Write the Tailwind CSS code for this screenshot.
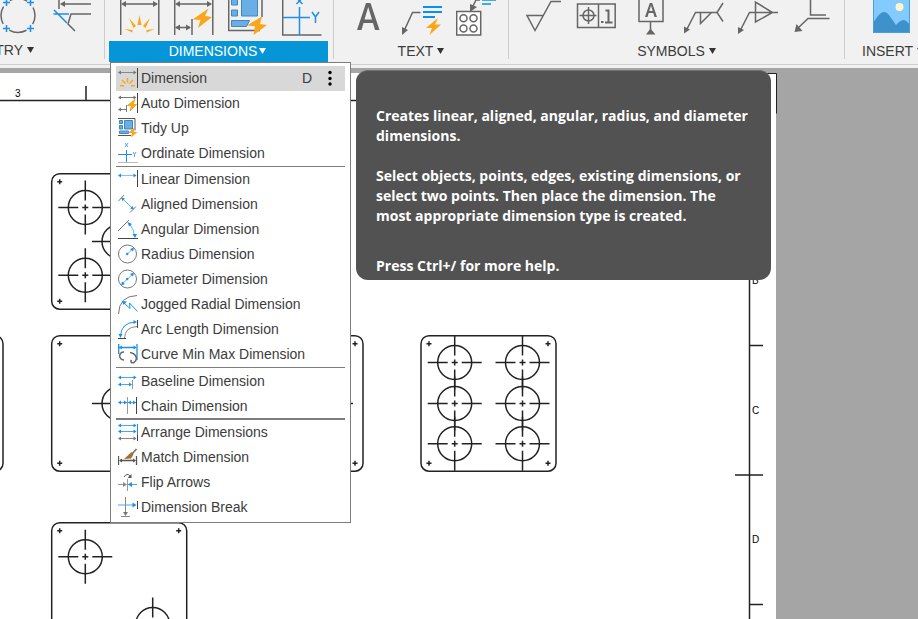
<!DOCTYPE html>
<html lang="en">
<head>
    <meta charset="UTF-8">
    <meta name="viewport" content="width=device-width, initial-scale=1.0">
    <title>Drawing - Dimensions</title>
    <script src="https://cdn.jsdelivr.net/npm/@tailwindcss/browser@4"></script>
</head>
<body class="relative flex h-screen flex-col overflow-hidden bg-[#a5a5a5] font-['Liberation_Sans',Arial,sans-serif] text-sm text-[#3c3c3c]">

    <!-- Toolbar -->
    <header class="flex h-[68px] shrink-0 overflow-hidden bg-[#f1f1f1]">
        <div class="flex min-w-full border-b border-[#cfcfcf] h-[65px]">

            <section class="flex h-[59px] w-[105px] shrink-0 flex-col border-r border-[#cccccc]">
                <div class="flex h-[41px] items-start justify-end gap-[14px] pr-3">
                    <button aria-label="Center mark pattern" class="shrink-0"><svg class="size-10" viewBox="0 0 40 40" fill="none">
                        <circle cx="20" cy="15.500" r="17" stroke="#666" stroke-width="1.500" stroke-dasharray="18 8.700" stroke-dashoffset="9"/>
                        <path d="M5 2.500h7M8.500 -1v7M29 2.500h7M32.500 -1v7M5 28.500h7M8.500 25v7M29 28.500h7M32.500 25v7" stroke="#1e8fe8" stroke-width="1.500"/>
                    </svg></button>
                    <button aria-label="Edge extension" class="shrink-0"><svg class="size-10" viewBox="0 0 40 40" fill="none" stroke="#666" stroke-width="1.500">
                        <path d="M7 -2v11M9 4h30M39 14H19l-3 10 7 7"/>
                        <path d="M8 4l5 -3v6z" fill="#666" stroke="none"/>
                        <path d="M1.500 14H17M2 10l13 13" stroke="#1e8fe8"/>
                    </svg></button>
                </div>
                <button class="flex h-[21px] w-full items-center justify-end gap-1 pr-[70px] pb-px"><span>TRY</span><svg class="h-[6px] w-[7px] shrink-0" viewBox="0 0 7 6"><path d="M0 0h7L3.500 6z" fill="#333"/></svg></button>
            </section>

            <section class="ml-1 w-[219px] shrink-0">
                <div class="flex h-[41px] items-start gap-[14px] pl-[11px]">
                    <button aria-label="Dimension"><svg class="size-10" viewBox="0 0 40 40" fill="none">
                        <path d="M.7 0v35M38.800 0v35M3 4h34" stroke="#666" stroke-width="1.500"/>
                        <path d="M1 4l5 -3v6zM38 4l-5 -3v6z" fill="#666"/>
                        <path d="M19.500 15l2 10h-4zM9 18l7 8-2.500 2zM30 18l-7 8 2.500 2zM4.500 29l8 1v2.500zM34.500 29l-8 1v2.500z" fill="#faa61a"/>
                    </svg></button>
                    <button aria-label="Auto Dimension"><svg class="size-10" viewBox="0 0 40 40" fill="none">
                        <path d="M.7 0v35M38.800 0v35M3 4h34M18 19v16M2 27.500h14" stroke="#666" stroke-width="1.500"/>
                        <path d="M1 4l5 -3v6zM38 4l-5 -3v6zM1 27.500l5 -3v6zM17 27.500l-5 -3v6z" fill="#666"/>
                        <path d="M34.500 8.500L18.500 19.500l8 .5-2.500 8L38 17l-7-1z" fill="#faa61a"/>
                    </svg></button>
                    <button aria-label="Tidy Up"><svg class="size-10" viewBox="0 0 40 40" fill="none">
                        <path d="M.7 0v30.500H32M34 0v17" stroke="#666" stroke-width="1.500"/>
                        <path d="M3.500 -2h6v7h-6zM13.500 -2h16v18h-16zM3.500 10h6v6h-6zM3.500 20.500h18l-3 6h-15z" fill="#69afe5" stroke="#4187bd"/>
                        <path d="M34 16.500L19 25.500l8 .8-1.500 8.700L39 25l-7-1z" fill="#faa61a"/>
                    </svg></button>
                    <button aria-label="Ordinate Dimension"><svg class="size-10" viewBox="0 0 40 40" fill="none" stroke="#1e8fe8" stroke-width="1.500">
                        <path d="M.7 0v35H39.500" stroke="#666"/>
                        <path d="M1 17.500h27M17.500 7v28M14.500 4l6 -6M20.500 4l-6 -6M30 12l3.500 5 3.500-5M33.500 17v6"/>
                    </svg></button>
                </div>
                <button class="flex h-[21px] w-full items-center justify-center gap-0.5 bg-[#0696d7] pr-0.5 pb-px text-white"><span>DIMENSIONS</span><svg class="h-[6px] w-[7px]" viewBox="0 0 7 6"><path d="M0 0h7L3.500 6z" fill="#fff"/></svg></button>
            </section>

            <section class="ml-[5px] h-[59px] w-[176px] shrink-0 border-x border-[#cccccc]">
                <div class="flex h-[41px] items-start gap-[14px] pl-[14px]">
                    <button aria-label="Text"><svg class="size-10" viewBox="0 0 40 40">
                        <path d="M9 30L18 3h4.500L31.500 30h-4.500l-2-7H15.500l-2 7zM16.500 19.500h7.500L20.200 7z" fill="#666" fill-rule="evenodd"/>
                    </svg></button>
                    <button aria-label="Leader text"><svg class="size-10" viewBox="0 0 40 40" fill="none">
                        <path d="M18.500 12.500h-8L2 31" stroke="#666" stroke-width="1.500"/>
                        <path d="M0 35v-8l6 3z" fill="#666"/>
                        <path d="M21 7h19M21 12h19M21 17h12" stroke="#0a91ee" stroke-width="2"/>
                        <path d="M36 18l-12 10h6l-2.500 7L39 24.500h-6z" fill="#faa61a"/>
                    </svg></button>
                    <button aria-label="Hole note"><svg class="size-10" viewBox="0 0 40 40" fill="none">
                        <path d="M.7 11.500h24v23.500H.7z" fill="#fff" stroke="#666" stroke-width="1.500"/>
                        <g stroke="#666" stroke-width="1.500"><circle cx="7.500" cy="18.300" r="3.500"/><circle cx="17.500" cy="18.300" r="3.500"/><circle cx="7.500" cy="28.500" r="3.500"/><circle cx="17.500" cy="28.500" r="3.500"/><path d="M24 0h-4l-4 8"/></g>
                        <path d="M14 12V4l7 3z" fill="#666"/>
                        <path d="M26 0h14M26 4h9" stroke="#0a91ee" stroke-width="1.500"/>
                    </svg></button>
                </div>
                <button class="flex h-[21px] w-full items-center justify-center gap-1 pb-px"><span>TEXT</span><svg class="h-[6px] w-[7px]" viewBox="0 0 7 6"><path d="M0 0h7L3.500 6z" fill="#333"/></svg></button>
            </section>

            <section class="h-[59px] w-[336px] shrink-0 border-r border-[#cccccc]">
                <div class="flex h-[41px] items-start gap-[14px] pl-[13px]">
                    <button aria-label="Surface texture"><svg class="size-10" viewBox="0 0 40 40" fill="none" stroke="#666" stroke-width="1.500">
                        <path d="M21 15.500H5l8 15L29 1.500h10"/>
                    </svg></button>
                    <button aria-label="Feature control frame"><svg class="size-10" viewBox="0 0 40 40" fill="none" stroke="#666" stroke-width="1.500">
                        <path d="M1.500 4h37.700v23.500h-37.700zM22.500 4v23.500M3.500 15.500h17M12.500 7v17"/><circle cx="12.500" cy="15.500" r="5.500"/>
                        <path d="M25 22h2.500M29.500 10.500h3v12M29 22.500h7.500" stroke-width="2"/>
                    </svg></button>
                    <button aria-label="Datum identifier"><svg class="size-10" viewBox="0 0 40 40" fill="none">
                        <path d="M9 -2v23.500h24V-2M20.500 22v8" stroke="#666" stroke-width="1.500"/>
                        <path d="M16 34.500l4.500-6 5 6z" fill="#666"/>
                        <path d="M15 17L19.800 3h2.400L27 17h-2.500l-1.200-4H18.700l-1.200 4zM19.300 11h3.400L21 5.500z" fill="#666" fill-rule="evenodd"/>
                    </svg></button>
                    <button aria-label="Welding symbol"><svg class="size-10" viewBox="0 0 40 40" fill="none" stroke="#666" stroke-width="1.500">
                        <path d="M2.500 30l9-17.500H33M16.500 12.500v11l11-11M39 3l-6 9.500 6 9"/><path d="M0 33.500v-7l6 3z" fill="#666" stroke="none"/>
                    </svg></button>
                    <button aria-label="Taper and slope"><svg class="size-10" viewBox="0 0 40 40" fill="none" stroke="#666" stroke-width="1.500">
                        <path d="M2.500 30l9-17.500H40M17.500 2v20l17-9.500z"/><path d="M0 34v-7l6 3z" fill="#666" stroke="none"/>
                    </svg></button>
                    <button aria-label="Bend note"><svg class="size-10" viewBox="0 0 40 40" fill="none" stroke="#666" stroke-width="1.500">
                        <path d="M18.500 0v15H34M37.500 18.500H16L6 28"/><path d="M2.500 32l2-8 6 7z" fill="#666" stroke="none"/>
                    </svg></button>
                </div>
                <button class="flex h-[21px] w-full items-center justify-center gap-1 pb-px"><span>SYMBOLS</span><svg class="h-[6px] w-[7px]" viewBox="0 0 7 6"><path d="M0 0h7L3.500 6z" fill="#333"/></svg></button>
            </section>

            <section class="grow">
                <div class="flex h-[41px] items-start pl-[27px]">
                    <button aria-label="Insert image" class="shrink-0"><svg class="size-10" viewBox="0 0 40 40">
                        <path d="M1 0h37v33H1z" fill="#83cbff"/>
                        <path d="M1 23C8 12 12 9 17 15l7 10c5-5 8-8 14 0v8H1z" fill="#3d92cc"/>
                        <circle cx="27.500" cy="7" r="4" fill="#fff6cb"/>
                        <path d="M1.500 0v32.500h36V0" fill="none" stroke="#4b9fd7"/>
                    </svg></button>
                </div>
                <button class="flex h-[21px] items-center gap-1 pb-px pl-[17px]"><span>INSERT</span><svg class="h-[6px] w-[7px] shrink-0" viewBox="0 0 7 6"><path d="M0 0h7L3.500 6z" fill="#333"/></svg></button>
            </section>
        </div>
    </header>

    <!-- Drawing sheet -->
    <main class="min-h-0 flex-1 overflow-hidden">
        <svg class="h-[551px] w-[778px]" viewBox="0 68 778 551" fill="none" stroke="#222" stroke-width="1.500" font-family="Liberation Sans" font-size="10">
            <defs>
                <g id="plus"><path d="M-2.500 0h5M0 -2.500v5"/></g>
                <g id="hole"><circle r="17"/><path d="M-27 0h20M-3 0h6M7 0h20M0 -27v20M0 -3v6M0 7v20"/></g>
                <g id="plate"><rect width="135" height="135.500" rx="8"/><use href="#plus" x="8" y="8"/><use href="#plus" x="127" y="8"/><use href="#plus" x="8" y="127.500"/><use href="#plus" x="127" y="127.500"/></g>
                <clipPath id="inside"><rect x="420" y="335.500" width="137" height="135.500"/></clipPath>
            </defs>
            <path d="M0 73h776v546H0z" fill="#fff" stroke="none"/>
            <path d="M700 73.500h76.500v40" stroke-width="1"/>
            <path d="M0 100.500h749.500M86 86v14M749.500 100v519M749 345.500h14M735 475h28M749 604.500h14"/>

            <use href="#plate" x="51.700" y="173.700"/>
            <use href="#hole" x="85.300" y="207.500"/>
            <use href="#hole" x="119" y="241.500"/>
            <use href="#hole" x="85.300" y="275.200"/>

            <use href="#plate" x="-132" y="335.700"/>
            <use href="#plate" x="51.700" y="335.700"/>
            <use href="#hole" x="119" y="403.500"/>
            <use href="#plate" x="228" y="335.700"/>
            <path d="M351 403.500h2"/>

            <use href="#plate" x="421" y="335.700"/>
            <g clip-path="url(#inside)">
                <use href="#hole" x="454.700" y="362.500"/><use href="#hole" x="522.500" y="362.500"/>
                <use href="#hole" x="454.700" y="403.500"/><use href="#hole" x="522.500" y="403.500"/>
                <use href="#hole" x="454.700" y="443.700"/><use href="#hole" x="522.500" y="443.700"/>
            </g>

            <use href="#plate" x="51.700" y="522.700"/>
            <use href="#hole" x="85.300" y="556.700"/>
            <use href="#hole" x="152.700" y="624.500"/>

            <g fill="#000" stroke="none">
                <text x="15" y="97">3</text>
                <text x="752" y="284">B</text>
                <text x="752" y="414">C</text>
                <text x="752" y="543">D</text>
            </g>
        </svg>
    </main>

    <!-- Dimensions menu -->
    <div role="menu" class="absolute left-[110px] top-[62px] flex w-[241px] flex-col border border-[#7d7d7d] bg-white px-[5px] pt-[3px] pb-0.5">
        <div class="flex h-[25px] items-center bg-[#d8d8d8] pr-[13px] pb-px pl-0.5">
            <button role="menuitem" class="flex grow items-center gap-[3px]">
                <svg class="size-5" viewBox="0 0 20 20" fill="none"><path d="M19.500 0v20" stroke="#444"/><path d="M1 4.500h17" stroke="#888"/><path d="M0 4.500l3-2v4zM18.500 4.500l-3-2v4z" fill="#777"/><path d="M9.500 10v4.500M4 12l3.500 3.500M15 12l-3.500 3.500M2 17.500l4 .5M17 17.500l-4 .5" stroke="#faa61a" stroke-width="1.500"/></svg>
                <span>Dimension</span>
                <kbd class="ml-auto font-[inherit]">D</kbd>
            </button>
            <button aria-label="More options" class="ml-[16px]"><svg class="h-4 w-1" viewBox="0 0 4 16"><circle cx="2" cy="2.500" r="1.700"/><circle cx="2" cy="8.500" r="1.700"/><circle cx="2" cy="14" r="1.700"/></svg></button>
        </div>
        <button role="menuitem" class="flex h-[25px] items-center gap-[3px] pb-px pl-0.5">
            <svg class="size-5" viewBox="0 0 20 20" fill="none"><path d="M19.500 0v20" stroke="#444"/><path d="M1 4.500h17M1 16.500h7M8.500 12v7" stroke="#777"/><path d="M0 4.500l3-2v4zM18.500 4.500l-3-2v4zM0 16.500l3-2v4z" fill="#777"/><path d="M17 6.500L9.500 12.500h4L12 18l6.500-6.500H15z" fill="#faa61a" stroke="#faa61a"/></svg>
            <span>Auto Dimension</span>
        </button>
        <button role="menuitem" class="flex h-[25px] items-center gap-[3px] pb-px pl-0.5">
            <svg class="size-5" viewBox="0 0 20 20" fill="none"><path d="M0 .5h17v12M0 17.500h13" stroke="#555"/><path d="M1.500 2.500h3v3h-3zM6.500 2.500h8v8.500h-8zM1.500 7.500h3V11h-3zM1.500 13h9v2.500h-9z" fill="#69afe5" stroke="#3f86bd"/><path d="M16 10l-6 5h4l-1 4.500 6.500-5.500h-3.500z" fill="#faa61a"/></svg>
            <span>Tidy Up</span>
        </button>
        <button role="menuitem" class="flex h-[25px] items-center gap-[3px] pb-px pl-0.5">
            <svg class="size-5" viewBox="0 0 20 20" fill="none" stroke="#1e8fe8"><path d="M0 19.500h20" stroke="#bbb"/><path d="M0 11.500h14M8.500 7v12"/><path d="M7 0l3 4M10 0L7 4M15 9l1.500 2.500L18 9M16.500 11.500V14" stroke-width=".8"/></svg>
            <span>Ordinate Dimension</span>
        </button>
        <hr class="border-[#7d7d7d]">
        <button role="menuitem" class="flex h-[25px] items-center gap-[3px] pb-px pl-0.5">
            <svg class="size-5" viewBox="0 0 20 20" fill="none"><path d="M19.500 1v17" stroke="#444"/><path d="M1 6.500h17" stroke="#80c0f3"/><path d="M0 6.500l3-2v4zM18.500 6.500l-3-2v4z" fill="#1e8fe8"/></svg>
            <span>Linear Dimension</span>
        </button>
        <button role="menuitem" class="flex h-[25px] items-center gap-[3px] pb-px pl-0.5">
            <svg class="size-5" viewBox="0 0 20 20" fill="none"><path d="M.5 7L6 1M12 18.500l6-6" stroke="#777"/><path d="M4 4.500l11 10" stroke="#69afe5"/><path d="M3 3.500l4 1-2.500 2.500zM16 15.500l-4-1 2.500-2.500z" fill="#1e8fe8"/></svg>
            <span>Aligned Dimension</span>
        </button>
        <button role="menuitem" class="flex h-[25px] items-center gap-[3px] pb-px pl-0.5">
            <svg class="size-5" viewBox="0 0 20 20" fill="none"><path d="M0 19.500h20" stroke="#444"/><path d="M0 12L11 1" stroke="#777"/><path d="M11.500 5q5 6 5 12" stroke="#69afe5"/><path d="M9.500 3l4.500 2-3 2.500zM17 19l-2.500-4H19z" fill="#1e8fe8"/></svg>
            <span>Angular Dimension</span>
        </button>
        <button role="menuitem" class="flex h-[25px] items-center gap-[3px] pb-px pl-0.5">
            <svg class="size-5" viewBox="0 0 20 20" fill="none"><circle cx="9.500" cy="10" r="9" stroke="#777"/><path d="M9.500 10l5-5" stroke="#69afe5"/><circle cx="9.200" cy="10" r="1.200" fill="#1e8fe8"/><path d="M16 3.500l-1 4-3-2.500z" fill="#1e8fe8"/></svg>
            <span>Radius Dimension</span>
        </button>
        <button role="menuitem" class="flex h-[25px] items-center gap-[3px] pb-px pl-0.5">
            <svg class="size-5" viewBox="0 0 20 20" fill="none"><circle cx="9.500" cy="10" r="9" stroke="#777"/><path d="M4 15L15 5" stroke="#69afe5"/><circle cx="9.200" cy="10" r="1.200" fill="#1e8fe8"/><path d="M16 3.500l-1 4-3-2.500zM3 16.500l1-4 3 2.500z" fill="#1e8fe8"/></svg>
            <span>Diameter Dimension</span>
        </button>
        <button role="menuitem" class="flex h-[25px] items-center gap-[3px] pb-px pl-0.5">
            <svg class="size-5" viewBox="0 0 20 20" fill="none"><path d="M.5 20Q1 2 19 1.500" stroke="#777"/><path d="M5 8l7 6.500-.5-5.500 8 8.500" stroke="#1e8fe8"/><path d="M4 7l5 .5L5.500 11z" fill="#1e8fe8"/></svg>
            <span>Jogged Radial Dimension</span>
        </button>
        <button role="menuitem" class="flex h-[25px] items-center gap-[3px] pb-px pl-0.5">
            <svg class="size-5" viewBox="0 0 20 20" fill="none"><path d="M19.500 1v8" stroke="#444"/><path d="M6.500 19Q7 8 19 7.500" stroke="#888"/><path d="M0 19.500h8" stroke="#444"/><path d="M2.500 17Q3 4 17 3" stroke="#1e8fe8"/><path d="M19 3l-3.500-2v4zM2.500 19l-2-4h4z" fill="#1e8fe8"/></svg>
            <span>Arc Length Dimension</span>
        </button>
        <button role="menuitem" class="flex h-[25px] items-center gap-[3px] pb-px pl-0.5">
            <svg class="size-5" viewBox="0 0 20 20" fill="none"><path d="M.7 0v10M19 0v16M1 3.500h17" stroke="#1e8fe8" stroke-width="1.300"/><path d="M1 3.500l3-2v4zM18.500 3.500l-3-2v4z" fill="#1e8fe8"/><path d="M6 8C0 8 .500 15.500 6 16M12 8.500c7 1.500 8 7 4 10-2 1-4-.500-2.500-2.500" stroke="#666" stroke-width="1.500"/></svg>
            <span>Curve Min Max Dimension</span>
        </button>
        <hr class="mb-px border-[#7d7d7d]">
        <button role="menuitem" class="flex h-[25px] items-center gap-[3px] pb-px pl-0.5">
            <svg class="size-5" viewBox="0 0 20 20" fill="none"><path d="M14.500 9v9" stroke="#999"/><path d="M1 6.500h17M1 13.500h12" stroke="#4aa6ef"/><path d="M0 6.500l3-2v4zM18.500 6.500l-3-2v4zM0 13.500l3-2v4zM14 13.500l-3-2v4z" fill="#1e8fe8"/></svg>
            <span>Baseline Dimension</span>
        </button>
        <button role="menuitem" class="flex h-[25px] items-center gap-[3px] pb-px pl-0.5">
            <svg class="size-5" viewBox="0 0 20 20" fill="none"><path d="M9.500 1v17" stroke="#999"/><path d="M18.500 1v17" stroke="#444"/><path d="M1 6.500h17" stroke="#4aa6ef"/><path d="M0 6.500l3-2v4zM9 6.500l-3-2v4zM10 6.500l3-2v4zM18 6.500l-3-2v4z" fill="#1e8fe8"/></svg>
            <span>Chain Dimension</span>
        </button>
        <hr class="-mt-px border-t-2 border-[#7d7d7d]">
        <button role="menuitem" class="flex h-[25px] items-center gap-[3px] pb-px pl-0.5">
            <svg class="size-5" viewBox="0 0 20 20" fill="none"><path d="M19.500 2v11" stroke="#1e8fe8"/><path d="M19.500 13v6" stroke="#444"/><path d="M1 3.500h17M1 9.500h17" stroke="#4aa6ef"/><path d="M1 16.500h17" stroke="#888"/><path d="M0 3.500l3-2v4zM18.500 3.500l-3-2v4zM0 9.500l3-2v4zM18.500 9.500l-3-2v4z" fill="#1e8fe8"/><path d="M0 16.500l3-2v4zM18.500 16.500l-3-2v4z" fill="#777"/></svg>
            <span>Arrange Dimensions</span>
        </button>
        <button role="menuitem" class="flex h-[25px] items-center gap-[3px] pb-px pl-0.5">
            <svg class="size-5" viewBox="0 0 20 20" fill="none"><path d="M.5 9v9M18.500 9v9M2 13.500h15" stroke="#555" stroke-width="1.300"/><path d="M1 13.500l3-2v4zM18 13.500l-3-2v4z" fill="#555"/><path d="M13 8l5.500-6" stroke="#777" stroke-width="1.800"/><path d="M13.500 5l2 2.500-2.500 4L6 12z" fill="#a3702d"/></svg>
            <span>Match Dimension</span>
        </button>
        <button role="menuitem" class="flex h-[25px] items-center gap-[3px] pb-px pl-0.5">
            <svg class="size-5" viewBox="0 0 20 20" fill="none"><path d="M9.500 7v12M0 12.500h8" stroke="#999"/><path d="M10 12.500h9" stroke="#4aa6ef"/><path d="M9 12.500l-4-2.500v5z" fill="#888"/><path d="M10 12.500l4-2.500v5z" fill="#1e8fe8"/><path d="M6 5q3-4.500 6-1" stroke="#555"/><path d="M13.500 2v4h-4z" fill="#555"/></svg>
            <span>Flip Arrows</span>
        </button>
        <button role="menuitem" class="flex h-[25px] items-center gap-[3px] pb-px pl-0.5">
            <svg class="size-5" viewBox="0 0 20 20" fill="none"><path d="M7.500 0v17M3 19.500h9" stroke="#888"/><path d="M5 15h5l-2.500 4z" fill="#777"/><path d="M0 8h15" stroke="#4aa6ef"/><path d="M18.500 8l-4-2.500v5z" fill="#1e8fe8"/><path d="M19.500 4v8" stroke="#444"/></svg>
            <span>Dimension Break</span>
        </button>
    </div>

    <!-- Command help -->
    <div role="tooltip" class="absolute left-[356px] top-[70px] w-[415px] rounded-xl border-t border-[#707070] bg-[#525252] px-5 pt-[35px] pb-1 font-['Open_Sans','Noto_Sans',sans-serif] text-sm leading-5 font-bold text-white">
        <p>Creates linear, aligned, angular, radius, and diameter<br>dimensions.</p>
        <p class="mt-5">Select objects, points, edges, existing dimensions, or<br>select two points. Then place the dimension. The<br>most appropriate dimension type is created.</p>
        <p class="mt-[30px]">Press Ctrl+/ for more help.</p>
    </div>
</body>
</html>
